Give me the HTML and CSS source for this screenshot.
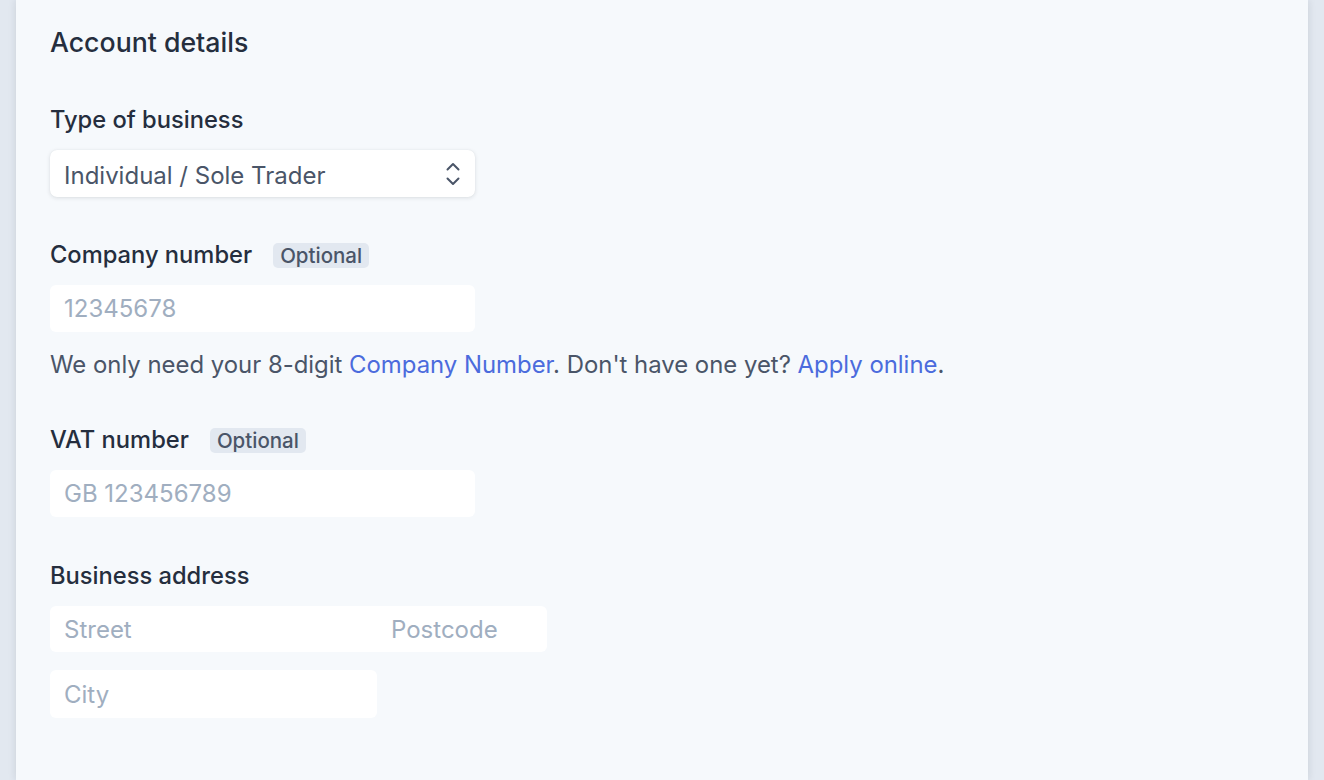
FILE: index.html
```html
<!DOCTYPE html>
<html lang="en">
<head>
<meta charset="utf-8">
<title>Account details</title>
<link rel="stylesheet" href="styles.css">
</head>
<body>
<main class="panel">
  <h2 class="title">Account details</h2>

  <section class="field field-first">
    <div class="label-row"><label class="label">Type of business</label></div>
    <div class="select">
      <span class="select-value">Individual / Sole Trader</span>
      <svg class="chevrons" width="14" height="24" viewBox="0 0 14 24" fill="none" stroke="#4a5568" stroke-width="2" stroke-linecap="round" stroke-linejoin="round">
        <path d="M1.5 7.5 L7 2 L12.5 7.5"/>
        <path d="M1.5 16.5 L7 22 L12.5 16.5"/>
      </svg>
    </div>
  </section>

  <section class="field">
    <div class="label-row"><label class="label">Company number</label><span class="badge">Optional</span></div>
    <div class="input"><span class="placeholder">12345678</span></div>
    <p class="help">We only need your 8-digit <a class="link">Company Number</a>. Don't have one yet? <a class="link">Apply online</a>.</p>
  </section>

  <section class="field field-vat">
    <div class="label-row"><label class="label">VAT number</label><span class="badge">Optional</span></div>
    <div class="input"><span class="placeholder">GB 123456789</span></div>
  </section>

  <section class="field field-address">
    <div class="label-row"><label class="label">Business address</label></div>
    <div class="input input-group">
      <span class="placeholder street">Street</span>
      <span class="placeholder">Postcode</span>
    </div>
    <div class="input input-city"><span class="placeholder">City</span></div>
  </section>
</main>
</body>
</html>
```

FILE: styles.css
```css
html, body {
  margin: 0;
  padding: 0;
}

body {
  background: #e2e8f0;
  font-family: "Inter", "Noto Sans", "Liberation Sans", sans-serif;
  height: 780px;
  overflow: hidden;
}

.panel {
  margin: 0 16px;
  min-height: 780px;
  box-sizing: border-box;
  background: #f6f9fc;
  box-shadow: 0 0 8px rgba(26, 32, 44, 0.12);
  padding: 27px 34px;
  display: flex;
  flex-direction: column;
}

.title {
  margin: 0;
  font-size: 26.7px;
  line-height: 30px;
  font-weight: 500;
  color: #252e3e;
}

.field {
  display: flex;
  flex-direction: column;
  align-items: flex-start;
}

.field-first {
  margin-top: 51px;
}

.field-first + .field {
  margin-top: 46px;
}

.field-vat {
  margin-top: 51px;
}

.field-address {
  margin-top: 47px;
}

.label-row {
  display: flex;
  align-items: center;
  height: 24px;
  margin-bottom: 18px;
}

.label {
  font-size: 23.7px;
  line-height: 24px;
  font-weight: 500;
  color: #252e3e;
}

.badge {
  margin-left: 21px;
  height: 25px;
  padding: 0 7px;
  border-radius: 5px;
  background: #e2e8f0;
  color: #4a5568;
  font-size: 20.5px;
  font-weight: 500;
  line-height: 25px;
}

.select {
  width: 425px;
  height: 47px;
  box-sizing: border-box;
  background: #fff;
  border-radius: 7px;
  box-shadow: 0 1px 4px rgba(26, 32, 44, 0.12), 0 0 1px rgba(26, 32, 44, 0.08);
  display: flex;
  align-items: center;
  justify-content: space-between;
  padding: 0 15px 0 14px;
}

.select-value {
  font-size: 24px;
  color: #4a5568;
  padding-top: 3px;
}

.chevrons {
  display: block;
}

.input {
  width: 425px;
  height: 47px;
  box-sizing: border-box;
  background: #fff;
  border-radius: 6px;
  display: flex;
  align-items: center;
  padding: 0 14px;
}

.placeholder {
  font-size: 24px;
  color: #a0aec0;
}

.input-group {
  width: 497px;
  height: 46px;
}

.street {
  width: 327px;
}

.input-city {
  width: 327px;
  height: 48px;
  margin-top: 18px;
}

.help {
  margin: 21px 0 0;
  font-size: 23.9px;
  line-height: 24px;
  color: #4a5568;
}

.link {
  color: #4b6bdd;
  text-decoration: none;
}
```
